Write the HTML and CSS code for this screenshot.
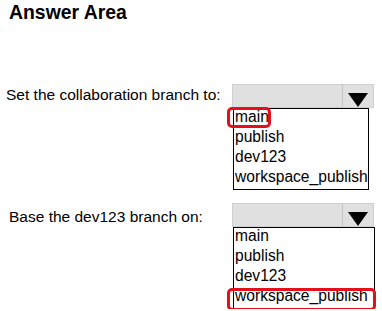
FILE: index.html
```html
<!DOCTYPE html>
<html>
<head>
<meta charset="utf-8">
<link rel="stylesheet" href="styles.css">
</head>
<body>
<h1 class="title">Answer Area</h1>
<div class="row row-first">
  <div class="label label-first">Set the collaboration branch to:</div>
  <div class="picker">
    <div class="picker-head">
      <span class="picker-field"></span>
      <span class="picker-arrow"><svg width="20" height="14" viewBox="0 0 20 14"><polygon points="0,0 20,0 10,14" fill="#000"/></svg></span>
    </div>
    <ul class="picker-list picker-list-narrow">
      <li class="picker-item"><span class="mark">main</span></li>
      <li class="picker-item">publish</li>
      <li class="picker-item">dev123</li>
      <li class="picker-item">workspace_publish</li>
    </ul>
  </div>
</div>
<div class="row row-second">
  <div class="label label-second">Base the dev123 branch on:</div>
  <div class="picker">
    <div class="picker-head">
      <span class="picker-field"></span>
      <span class="picker-arrow"><svg width="20" height="14" viewBox="0 0 20 14"><polygon points="0,0 20,0 10,14" fill="#000"/></svg></span>
    </div>
    <ul class="picker-list picker-list-wide">
      <li class="picker-item">main</li>
      <li class="picker-item">publish</li>
      <li class="picker-item">dev123</li>
      <li class="picker-item mark-row">workspace_publish</li>
    </ul>
  </div>
</div>
</body>
</html>
```

FILE: styles.css
```css
html, body {
  margin: 0;
  padding: 0;
  background: #fff;
}
body {
  font-family: "Liberation Sans", Arial, sans-serif;
  color: #000;
  overflow: hidden;
}
.title {
  margin: 0;
  padding: 1px 0 0 9px;
  font-size: 19.4px;
  line-height: 22px;
  font-weight: bold;
}
.row {
  display: flex;
  align-items: flex-start;
}
.row-first {
  margin-top: 61px;
}
.row-second {
  margin-top: 13px;
}
.label {
  flex: 0 0 232px;
  box-sizing: border-box;
  font-size: 15.5px;
  line-height: 18px;
}
.label-first {
  padding: 2px 0 0 6px;
}
.label-second {
  padding: 5px 0 0 9px;
}
.picker {
  width: 142px;
}
.picker-head {
  display: flex;
  height: 24px;
  box-sizing: border-box;
  background: #e0e0e0;
  border: 1px solid #cfcfcf;
}
.picker-field {
  flex: 1;
}
.picker-arrow {
  flex: 0 0 31px;
  box-sizing: border-box;
  border-left: 1px solid #c4c4c4;
  padding: 8px 0 0 5px;
}
.picker-arrow svg {
  display: block;
}
.picker-list {
  list-style: none;
  margin: 0 0 0 1px;
  padding: 0;
  border: 1px solid #000;
  box-sizing: border-box;
}
.picker-list-narrow {
  width: 136px;
}
.picker-list-wide {
  width: 142px;
}
.picker-item {
  font-size: 15.6px;
  line-height: 16px;
  height: 20px;
  box-sizing: border-box;
  padding: 0 0 4px 1px;
  white-space: nowrap;
}
.mark {
  display: inline-block;
  vertical-align: top;
  position: relative;
}
.mark::after,
.mark-row::after {
  content: "";
  position: absolute;
  border: 3px solid #e3101b;
  border-radius: 5px;
}
.mark::after {
  top: -2px;
  bottom: -3px;
  left: -8px;
  right: -2px;
}
.mark-row {
  position: relative;
}
.mark-row::after {
  top: 0;
  bottom: -3px;
  left: -7px;
  right: -2px;
}
```
